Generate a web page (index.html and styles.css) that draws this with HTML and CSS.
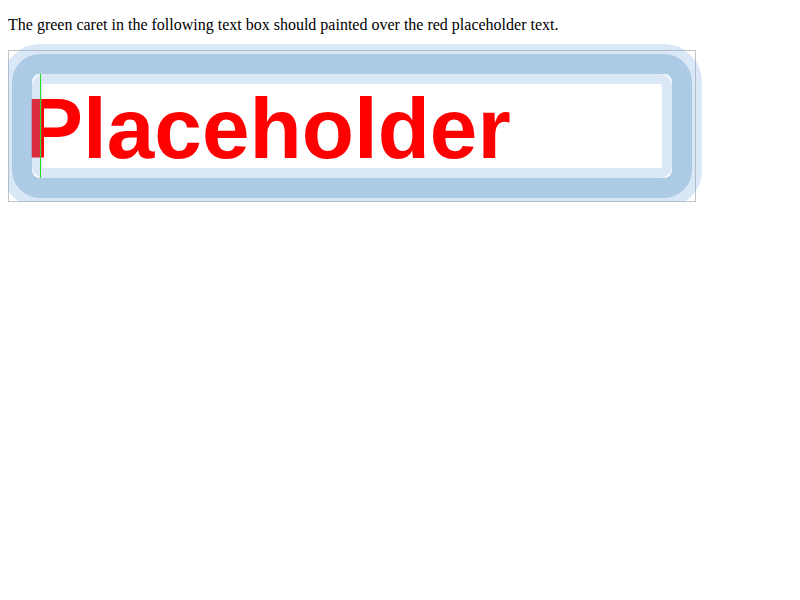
FILE: index.html
```html
<!DOCTYPE html>
<html>
<head>
<meta charset="utf-8">
<link rel="stylesheet" href="styles.css">
</head>
<body>
<p class="intro">The green caret in the following text box should painted over the red placeholder text.</p>
<div class="box">
  <div class="placeholder">Placeholder</div>
  <div class="ring"><div class="ring-mid"><div class="ring-inner"></div></div></div>
  <div class="caret"></div>
</div>
</body>
</html>
```
FILE: styles.css
```css
body {
  margin: 8px;
  font-family: "Liberation Serif", serif;
  font-size: 16px;
  background: #fff;
}
.intro {
  margin: 8px 0 16px;
}
.box {
  position: relative;
  width: 686px;
  height: 150px;
  border: 1px solid #c4c4c4;
}
.placeholder {
  padding: 35px 0 0 17px;
  font-family: "Liberation Sans", Arial, sans-serif;
  font-weight: bold;
  font-size: 85.5px;
  line-height: 86px;
  color: #ff0000;
  white-space: nowrap;
}
.ring {
  position: absolute;
  left: -7px;
  top: -7px;
  right: -7px;
  bottom: -7px;
  border: 10px solid rgba(118, 165, 227, 0.27);
  border-radius: 38px;
}
.ring-mid {
  position: absolute;
  inset: 0;
  border: 20px solid rgba(52, 125, 192, 0.4);
  border-radius: 28px;
}
.ring-inner {
  position: absolute;
  inset: 0;
  border: 10px solid rgba(118, 165, 227, 0.27);
  border-radius: 12px;
}
.caret {
  position: absolute;
  left: 31px;
  top: 23px;
  width: 1px;
  height: 104px;
  background: #22dd22;
}
```
